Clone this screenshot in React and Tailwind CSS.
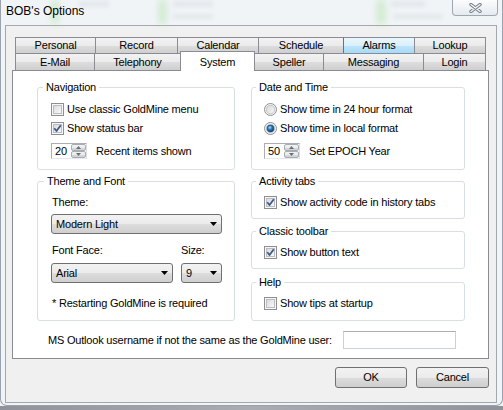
import React from "react";

// shared Win7 button face
const face = "bg-[linear-gradient(#f2f2f2_0%,#ebebeb_50%,#dddddd_51%,#cfcfcf_100%)]";

const topRow = [
  { label: "Personal", w: "w-[80px]" },
  { label: "Record", w: "w-[82px]" },
  { label: "Calendar", w: "w-[81px]" },
  { label: "Schedule", w: "w-[85px]" },
  { label: "Alarms", w: "w-[71px]", hot: true },
  { label: "Lookup", w: "w-[72px]", last: true },
];

const bottomRow = [
  { label: "E-Mail", w: "w-[79px]" },
  { label: "Telephony", w: "w-[86px]" },
  { label: "System", w: "w-[75px]", active: true },
  { label: "Speller", w: "w-[68px]", afterActive: true },
  { label: "Messaging", w: "w-[100px]" },
  { label: "Login", w: "w-[63px]", last: true },
];

const Tab = ({ label, w, hot, active, last, afterActive }) => {
  if (active) {
    return (
      <div className={`relative z-10 -mb-px flex h-[20px] items-start justify-center border-x border-t border-[#898c95] bg-white pt-[2px] ${w}`}>
        {label}
      </div>
    );
  }
  return (
    <div
      className={`flex h-full items-center justify-center border-t border-[#898c95] ${afterActive ? "" : "border-l"} ${last ? "border-r" : ""} ${
        hot ? "bg-[linear-gradient(#eaf6fd_0%,#d9f0fc_50%,#bee6fd_51%,#a7d9f5_100%)] border-l-[#3c7fb1]" : face
      } ${w}`}
    >
      {label}
    </div>
  );
};

const CheckBox = ({ checked }) => (
  <svg width="13" height="13" viewBox="0 0 13 13" className="shrink-0">
    <defs>
      <linearGradient id="cb-fill" x1="0" y1="0" x2="1" y2="1">
        <stop offset="0" stopColor="#d6d8db" />
        <stop offset="1" stopColor="#fbfbfb" />
      </linearGradient>
    </defs>
    <rect x="0.5" y="0.5" width="12" height="12" fill="#f6f6f6" stroke="#8e8f8f" />
    <rect x="2.5" y="2.5" width="8" height="8" fill="url(#cb-fill)" stroke="#b9bdc2" />
    {checked && (
      <path d="M3.3 6.3l2.2 2.7 4.3-5.7" fill="none" stroke="#40598a" strokeWidth="1.8" strokeLinejoin="round" />
    )}
  </svg>
);

const Radio = ({ checked }) => (
  <svg width="13" height="13" viewBox="0 0 13 13" className="shrink-0">
    <defs>
      <linearGradient id="rb-fill" x1="0" y1="0" x2="1" y2="1">
        <stop offset="0" stopColor="#d2d4d7" />
        <stop offset="1" stopColor="#fbfbfb" />
      </linearGradient>
      <radialGradient id="rb-dot" cx="0.4" cy="0.35" r="0.7">
        <stop offset="0" stopColor="#9fdcff" />
        <stop offset="0.45" stopColor="#2b7cc4" />
        <stop offset="1" stopColor="#0b3667" />
      </radialGradient>
    </defs>
    <circle cx="6.5" cy="6.5" r="6" fill="#f4f4f4" stroke="#8e8f8f" />
    <circle cx="6.5" cy="6.5" r="4.2" fill="url(#rb-fill)" stroke="#b9bdc2" strokeWidth="0.8" />
    {checked && <circle cx="6.5" cy="6.5" r="3.4" fill="url(#rb-dot)" stroke="#1c3f6b" strokeWidth="0.7" />}
  </svg>
);

const Arrow = ({ up }) => (
  <svg width="5" height="3" viewBox="0 0 5 3">
    <path d={up ? "M0 3h5L2.5 0z" : "M0 0h5L2.5 3z"} fill="#6a6f76" />
  </svg>
);

const Spinner = ({ value }) => (
  <div className="flex h-[16px] w-[36px] border border-[#abadb3] border-b-[#e3e9ef] border-r-[#dbdfe6] bg-white">
    <span className="flex-1 pl-[3px] leading-[14px]">{value}</span>
    <div className="flex w-[15px] flex-col">
      <div className={`flex h-[7px] items-center justify-center rounded-[2px] border border-[#a7adb5] ${face}`}>
        <Arrow up />
      </div>
      <div className={`flex h-[7px] items-center justify-center rounded-[2px] border border-[#a7adb5] ${face}`}>
        <Arrow />
      </div>
    </div>
  </div>
);

const Combo = ({ value, w }) => (
  <div className={`flex h-[20px] items-center justify-between rounded-[3px] border border-[#707070] pl-[4px] pr-[4px] ${face} ${w}`}>
    <span>{value}</span>
    <svg width="7" height="4" viewBox="0 0 7 4">
      <path d="M0 0h7L3.5 4z" fill="#000" />
    </svg>
  </div>
);

const Group = ({ label, className = "", legendPad = "ml-[5px]", children }) => (
  <fieldset className={`rounded-[3px] border border-[#d5dfe5] ${className}`}>
    <legend className={`px-[3px] leading-[14px] ${legendPad}`}>{label}</legend>
    {children}
  </fieldset>
);

const Option = ({ control, label, className = "" }) => (
  <div className={`flex h-[16px] items-center ${className}`}>
    {control}
    <span className="ml-[3px] leading-[14px]">{label}</span>
  </div>
);

const Button = ({ children, w }) => (
  <button className={`flex h-[21px] items-center justify-center rounded-[3px] border border-[#707070] ${face} ${w}`}>
    {children}
  </button>
);

// faint shapes of the desktop seen through the glass title bar
const glass = [
  "left-[50px] w-[8px] bg-[#a6e09c]",
  "left-[157px] w-[9px] bg-[#a6e09c]",
  "left-[375px] w-[10px] bg-[#a6e09c]",
];

export default function App() {
  return (
    <div className="flex h-[410px] w-[503px] flex-col overflow-hidden bg-[#f1f4f7] font-['Liberation_Sans',Arial,sans-serif] text-[11px] tracking-[-0.2px] text-black">
      <div className="h-[406px] w-[503px] shrink-0 overflow-hidden rounded-b-[7px] border-x border-b border-[#9aa3ad] bg-[#f1f4f7]">
        {/* title bar */}
        <div className="relative flex h-[25px] items-start justify-between">
          {glass.map((g) => (
            <div key={g} className={`absolute top-0 h-[24px] opacity-40 blur-[3px] ${g}`} />
          ))}
          <div className="absolute left-[78px] top-[1px] h-[6px] w-[30px] bg-[#c4c8ce] opacity-30 blur-[2px]" />
          <div className="absolute left-[172px] top-[1px] h-[6px] w-[40px] bg-[#c4c8ce] opacity-30 blur-[2px]" />
          <div className="absolute left-[390px] top-[1px] h-[6px] w-[34px] bg-[#c4c8ce] opacity-30 blur-[2px]" />
          <div className="absolute left-[172px] top-[14px] h-[5px] w-[40px] bg-[#c4c8ce] opacity-30 blur-[2px]" />
          <div className="absolute left-[392px] top-[14px] h-[5px] w-[50px] bg-[#c4c8ce] opacity-30 blur-[2px]" />
          <span className="relative pl-[5px] pt-[4px] text-[12px] leading-[14px] tracking-normal">BOB's Options</span>
          <div className="relative mr-[4px] flex h-[16px] w-[46px] items-center justify-center rounded-b-[4px] border-x border-b border-[#9ea8b4] bg-[linear-gradient(#fbfcfd,#e6eaef)]">
            <svg width="13" height="10" viewBox="0 0 13 10">
              <path d="M2 1.5l9 7M11 1.5l-9 7" stroke="#757c86" strokeWidth="3.4" strokeLinecap="round" />
              <path d="M2 1.5l9 7M11 1.5l-9 7" stroke="#f1f3f5" strokeWidth="1.5" strokeLinecap="round" />
            </svg>
          </div>
        </div>

        {/* client area */}
        <div className="ml-[4px] h-[378px] w-[492px] border border-[#a3a8ae] bg-[#f0f0f0] pl-[6px] pt-[11px]">
          <div className="pl-[3px]">
            <div className="flex h-[16px]">
              {topRow.map((t) => (
                <Tab key={t.label} {...t} />
              ))}
            </div>
            <div className="flex h-[17px] items-end">
              {bottomRow.map((t) => (
                <Tab key={t.label} {...t} />
              ))}
            </div>
          </div>

          <div className="h-[289px] w-[477px] border border-[#898c95] bg-white pl-[24px] pt-[9px]">
            <div className="flex gap-[16px]">
              <div className="flex w-[198px] flex-col">
                <Group label="Navigation" className="w-[198px]">
                  <div className="pb-[10px] pl-[13px]">
                    <Option className="mt-[7px]" control={<CheckBox />} label="Use classic GoldMine menu" />
                    <Option className="mt-[3px]" control={<CheckBox checked />} label="Show status bar" />
                    <div className="mt-[7px] flex items-center">
                      <Spinner value="20" />
                      <span className="ml-[9px] leading-[14px]">Recent items shown</span>
                    </div>
                  </div>
                </Group>

                <Group label="Theme and Font" className="mt-[4px] w-[198px]" legendPad="ml-[6px]">
                  <div className="pb-[10px] pl-[13px]">
                    <div className="mt-[7px] pl-px leading-[14px]">Theme:</div>
                    <div className="mt-[5px]">
                      <Combo value="Modern Light" w="w-[171px]" />
                    </div>
                    <div className="mt-[9px] flex leading-[14px]">
                      <span className="w-[130px] pl-px">Font Face:</span>
                      <span>Size:</span>
                    </div>
                    <div className="mt-[6px] flex gap-[8px]">
                      <Combo value="Arial" w="w-[122px]" />
                      <Combo value="9" w="w-[41px]" />
                    </div>
                    <div className="mt-[13px] pl-px leading-[14px]">* Restarting GoldMine is required</div>
                  </div>
                </Group>
              </div>

              <div className="flex w-[214px] flex-col">
                <Group label="Date and Time" className="w-[214px]" legendPad="ml-[4px]">
                  <div className="pb-[10px] pl-[12px]">
                    <Option className="mt-[7px]" control={<Radio />} label="Show time in 24 hour format" />
                    <Option className="mt-[3px]" control={<Radio checked />} label="Show time in local format" />
                    <div className="mt-[7px] flex items-center">
                      <Spinner value="50" />
                      <span className="ml-[9px] leading-[14px]">Set EPOCH Year</span>
                    </div>
                  </div>
                </Group>

                <Group label="Activity tabs" className="mt-[4px] w-[214px]" legendPad="ml-[4px]">
                  <div className="pb-[8px] pl-[12px] pt-[6px]">
                    <Option control={<CheckBox checked />} label="Show activity code in history tabs" />
                  </div>
                </Group>

                <Group label="Classic toolbar" className="mt-[5px] w-[214px]" legendPad="ml-[4px]">
                  <div className="pb-[8px] pl-[12px] pt-[6px]">
                    <Option control={<CheckBox checked />} label="Show button text" />
                  </div>
                </Group>

                <Group label="Help" className="mt-[6px] w-[214px]" legendPad="ml-[4px]">
                  <div className="pb-[9px] pl-[12px] pt-[6px]">
                    <Option control={<CheckBox />} label="Show tips at startup" />
                  </div>
                </Group>
              </div>
            </div>

            <div className="ml-[11px] mt-[10px] flex w-[408px] items-center justify-between">
              <span className="leading-[14px]">MS Outlook username if not the same as the GoldMine user:</span>
              <div className="h-[18px] w-[113px] border border-[#c9d1da] border-t-[#abadb3] bg-white" />
            </div>
          </div>

          <div className="mt-[8px] flex w-[477px] justify-end gap-[9px]">
            <Button w="w-[72px]">OK</Button>
            <Button w="w-[73px]">Cancel</Button>
          </div>
        </div>
      </div>
      {/* whatever sits below the dialog */}
      <div className="flex-1 bg-[linear-gradient(90deg,#8f9399,#a9adb2_50%,#8f9399)]" />
    </div>
  );
}
